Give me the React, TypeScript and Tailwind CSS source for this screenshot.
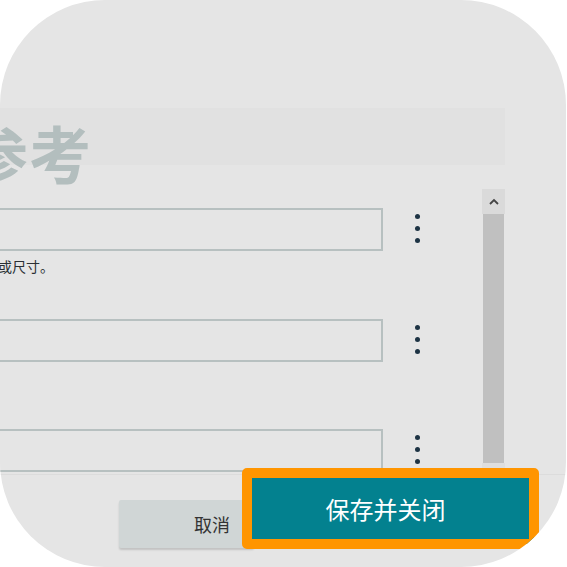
import React from "react";

const cjk = { fontFamily: '"Noto Sans CJK SC", "Noto Sans", sans-serif' };

function Kebab() {
  return (
    <div className="flex w-[68px] flex-col items-center gap-[7px] pt-[6px]">
      <span className="h-[5px] w-[5px] rounded-full bg-[#1d3344]" />
      <span className="h-[5px] w-[5px] rounded-full bg-[#1d3344]" />
      <span className="h-[5px] w-[5px] rounded-full bg-[#1d3344]" />
    </div>
  );
}

function Row({ helper }: { helper?: string }) {
  return (
    <div className="flex flex-col">
      <div className="flex">
        <div className="ml-[-20px] h-[43px] w-[403px] border-2 border-[#b7c0c0] bg-[#e5e5e5]" />
        <Kebab />
      </div>
      {helper ? (
        <div className="mt-[7px] ml-[-2px] h-[16px] text-[14px] leading-[16px] text-[#2a2f33]">{helper}</div>
      ) : null}
    </div>
  );
}

export default function App() {
  return (
    <div className="h-[567px] w-[567px] bg-white" style={cjk}>
      <div className="relative flex h-[567px] w-[566px] flex-col overflow-hidden rounded-[105px] bg-[#e5e5e5]">
        <div className="h-[108px] shrink-0" />
        {/* header band */}
        <div className="relative h-[57px] w-[505px] shrink-0 bg-[#e1e1e1]">
          <div className="ml-[-34px] pt-[9px] text-[62px] font-bold leading-[70px] tracking-[1px] text-[#b3bebe]">
            参考
          </div>
        </div>
        {/* body */}
        <div className="flex h-[309px] w-[505px] shrink-0 overflow-hidden">
          <div className="flex flex-1 flex-col pt-[43px]">
            <Row helper="或尺寸。" />
            <div className="h-[45px]" />
            <Row />
            <div className="h-[67px]" />
            <Row />
          </div>
          <div className="mt-[24px] flex h-[280px] w-[23px] flex-col">
            <div className="flex h-[25px] items-center justify-center bg-[#dadada]">
              <svg width="10" height="7" viewBox="0 0 10 7" fill="none">
                <path d="M1 6 L5 2 L9 6" stroke="#444" strokeWidth="1.8" />
              </svg>
            </div>
            <div className="mx-[1px] h-[249px] bg-[#c0c0c0]" />
            <div className="flex-1 bg-[#dedede]" />
          </div>
        </div>
        {/* footer */}
        <div className="flex h-[93px] shrink-0 items-start border-t border-[#dcdcdc] pl-[119px]">
          <div className="mt-[25px] flex h-[48px] w-[135px] items-center justify-end rounded-[2px] bg-[#d0d6d6] pr-[24px] text-[18px] text-[#333] shadow-[0_2px_2px_rgba(0,0,0,0.15)]">
            取消
          </div>
          <div className="relative z-10 ml-[-12px] mt-[-7px] flex h-[81px] w-[297px] items-center justify-center rounded-[5px] border-[10px] border-[#ff9500] bg-[#03818f] pr-[10px] text-[24px] font-normal text-white">
            保存并关闭
          </div>
        </div>
      </div>
    </div>
  );
}
